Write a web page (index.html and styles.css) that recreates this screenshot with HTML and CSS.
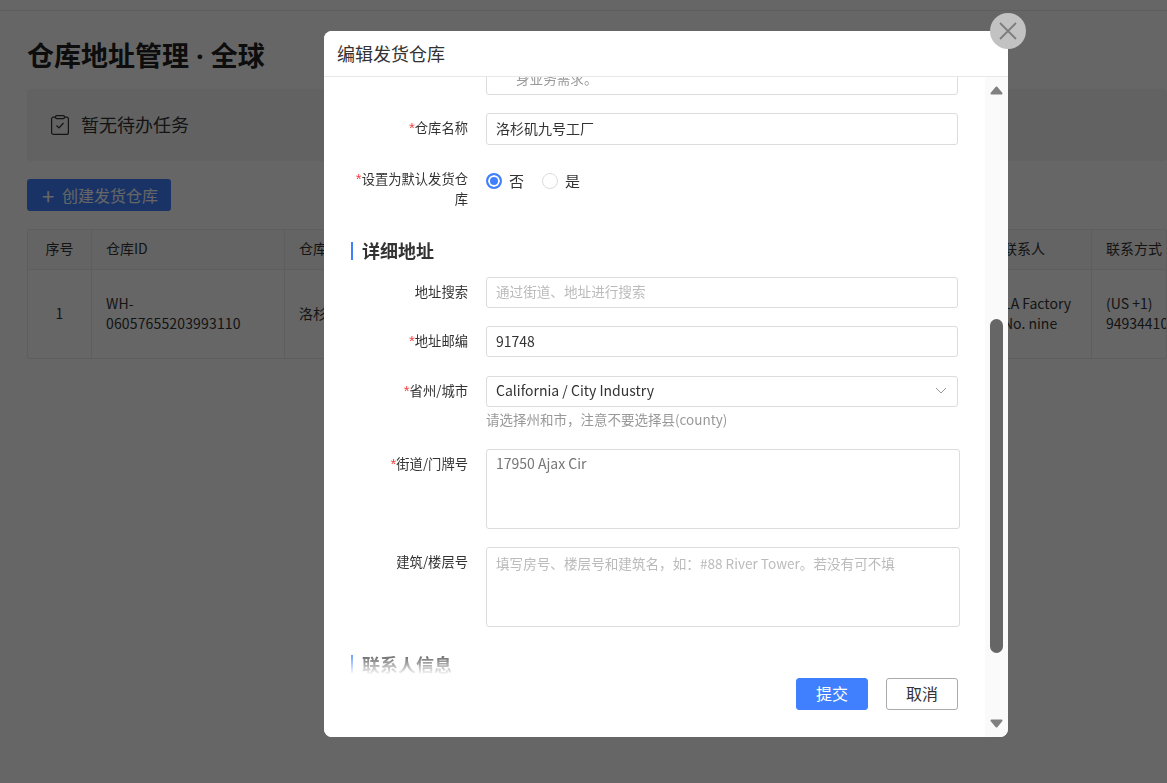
FILE: index.html
```html
<!DOCTYPE html>
<html lang="zh-CN">
<head>
    <meta charset="UTF-8">
    <title>仓库地址管理</title>
    <link rel="stylesheet" href="styles.css">
</head>
<body>
    <div class="topbar">
        <svg class="topbar-art" width="95" height="10" viewBox="0 0 95 10">
            <path d="M18 0 L44 10 L58 10 L32 0 Z" fill="#fff" opacity="0.25"/>
            <path d="M50 0 L76 10 L94 10 L72 0 Z" fill="#fff" opacity="0.3"/>
        </svg>
    </div>

    <div class="page">
        <h1 class="page-title">仓库地址管理<span class="dot"> · </span>全球</h1>

        <div class="todo">
            <svg width="18" height="20" viewBox="0 0 18 20" fill="none" stroke="#333" stroke-width="1.2">
                <rect x="0.6" y="2.1" width="16.8" height="17.3" rx="2"/>
                <rect x="4.6" y="0.6" width="8.8" height="3" rx="1" fill="#f5f5f5"/>
                <path d="M5.5 10.5 L8 13 L12.5 8"/>
            </svg>
            <span class="todo-text">暂无待办任务</span>
        </div>

        <button class="create-btn"><span class="plus">+</span>创建发货仓库</button>

        <div class="table">
            <div class="cell head col-no">序号</div>
            <div class="cell head">仓库ID</div>
            <div class="cell head">仓库名称</div>
            <div class="cell head">联系人</div>
            <div class="cell head">联系方式</div>
            <div class="cell col-no">1</div>
            <div class="cell wide-num">WH-<br>06057655203993110</div>
            <div class="cell">洛杉矶九号工厂</div>
            <div class="cell">LA Factory<br>No. nine</div>
            <div class="cell">(US +1)<br>9493441000</div>
        </div>
    </div>

    <div class="mask"></div>

    <div class="modal">
        <div class="modal-head">编辑发货仓库</div>

        <div class="modal-body">
            <div class="row clipped-row">
                <div class="field-label"></div>
                <div class="box clipped"><span>身业务需求。</span></div>
            </div>

            <div class="row">
                <label class="field-label"><i>*</i>仓库名称</label>
                <div class="box">洛杉矶九号工厂</div>
            </div>

            <div class="row radio-row">
                <label class="field-label"><i>*</i>设置为默认发货仓库</label>
                <div class="radios">
                    <span class="radio on"></span><span class="radio-text">否</span>
                    <span class="radio"></span><span class="radio-text">是</span>
                </div>
            </div>

            <h3 class="section">详细地址</h3>

            <div class="row small first">
                <label class="field-label">地址搜索</label>
                <div class="box hint-text">通过街道、地址进行搜索</div>
            </div>

            <div class="row small">
                <label class="field-label"><i>*</i>地址邮编</label>
                <div class="box">91748</div>
            </div>

            <div class="row small tight">
                <label class="field-label"><i>*</i>省州/城市</label>
                <div class="field-col">
                    <div class="box select">
                        California / City Industry
                        <svg width="12" height="7" viewBox="0 0 12 7" fill="none" stroke="#999" stroke-width="1">
                            <path d="M1 1 L6 6 L11 1"/>
                        </svg>
                    </div>
                    <div class="field-tip">请选择州和市，注意不要选择县(county)</div>
                </div>
            </div>

            <div class="row">
                <label class="field-label"><i>*</i>街道/门牌号</label>
                <div class="box area muted">17950 Ajax Cir</div>
            </div>

            <div class="row">
                <label class="field-label">建筑/楼层号</label>
                <div class="box area hint-text">填写房号、楼层号和建筑名，如：#88 River Tower。若没有可不填</div>
            </div>

            <h3 class="section last">联系人信息</h3>
        </div>

        <div class="modal-fade"></div>
        <div class="modal-foot">
            <button class="btn primary">提交</button>
            <button class="btn">取消</button>
        </div>

        <div class="scrollbar">
            <svg class="arrow up" width="13" height="9" viewBox="0 0 13 9">
                <path d="M6.5 1.5 L11.5 7.5 L1.5 7.5 Z" fill="#808080" stroke="#808080" stroke-width="2" stroke-linejoin="round"/>
            </svg>
            <span class="thumb"></span>
            <svg class="arrow down" width="13" height="9" viewBox="0 0 13 9">
                <path d="M1.5 1.5 L11.5 1.5 L6.5 7.5 Z" fill="#808080" stroke="#808080" stroke-width="2" stroke-linejoin="round"/>
            </svg>
        </div>
    </div>

    <button class="close-btn">
        <svg width="20" height="20" viewBox="0 0 20 20" stroke="#7d7d7d" stroke-width="1.8">
            <path d="M2 2 L18 18 M18 2 L2 18"/>
        </svg>
    </button>
</body>
</html>
```

FILE: styles.css
```css
* {
    margin: 0;
    padding: 0;
    box-sizing: border-box;
}

html, body {
    height: 100%;
    overflow: hidden;
}

body {
    background: #fff;
    color: #333;
    font-family: "Noto Sans CJK SC", "Open Sans", sans-serif;
    font-size: 14px;
}

/* Page under the dialog */
.topbar {
    height: 11px;
    background: #fff;
    border-bottom: 1px solid #eaeaea;
}

.topbar-art {
    display: block;
}

.page {
    padding: 0 0 0 27px;
}

.page-title {
    margin-top: 26px;
    height: 36px;
    font-size: 27px;
    line-height: 36px;
    font-weight: 700;
    color: #222;
}

.dot {
    font-family: "Open Sans", sans-serif;
    white-space: pre;
}

.todo {
    display: flex;
    align-items: center;
    gap: 12px;
    height: 72px;
    margin-top: 16px;
    padding-left: 24px;
    background: #f5f5f5;
    border-radius: 4px;
    font-size: 18px;
    color: #333;
}

.todo-text {
    margin-top: -2px;
}

.create-btn {
    display: flex;
    align-items: center;
    width: 144px;
    height: 32px;
    margin-top: 18px;
    padding-left: 15px;
    background: #4080ff;
    border: none;
    border-radius: 3px;
    color: #fff;
    font-family: inherit;
    font-size: 16px;
}

.plus {
    width: 20px;
    font-size: 22px;
    line-height: 32px;
    text-align: left;
}

.table {
    display: grid;
    grid-template-columns: 64px 193px 704px 103px 1fr;
    grid-template-rows: 40px 88px;
    margin-top: 18px;
    border: 1px solid #eaeaea;
    border-right: none;
    border-radius: 3px;
    line-height: 20px;
}

.cell {
    display: flex;
    flex-direction: column;
    justify-content: center;
    padding-left: 14px;
    padding-bottom: 3px;
    border-right: 1px solid #eaeaea;
    white-space: nowrap;
    overflow: hidden;
    color: #333;
}

.cell.head {
    padding-bottom: 4px;
    background: #fafafa;
    border-bottom: 1px solid #eaeaea;
}

.col-no {
    align-items: center;
    padding-left: 0;
}

.wide-num {
    letter-spacing: 0.15px;
}

.mask {
    position: fixed;
    inset: 0;
    background: rgba(0, 0, 0, 0.6);
}

/* Dialog */
.modal {
    position: fixed;
    left: 324px;
    top: 31px;
    width: 684px;
    height: 706px;
    background: #fff;
    border-radius: 8px;
    overflow: hidden;
}

.modal-head {
    height: 46px;
    padding-left: 13px;
    border-bottom: 1px solid #e8e8e8;
    background: #fff;
    position: relative;
    z-index: 1;
    font-size: 18px;
    line-height: 45px;
    color: #333;
}

.modal-body {
    height: 597px;
    padding-left: 27px;
    overflow: hidden;
}

.row {
    display: flex;
    gap: 18px;
    margin-bottom: 18px;
}

.row.small {
    margin-bottom: 19px;
}

.row.small.first {
    margin-bottom: 18px;
}

.row.small.tight {
    margin-bottom: 20px;
}

.field-label {
    flex: none;
    width: 117px;
    padding-top: 5px;
    font-size: 13.3px;
    line-height: 20px;
    text-align: right;
    color: #333;
}

.field-label i {
    font-family: "Liberation Sans", sans-serif;
    font-size: 15px;
    font-style: normal;
    color: #f53f3f;
}

.box {
    width: 472px;
    height: 32px;
    padding-left: 9px;
    border: 1px solid #dcdcdc;
    border-radius: 3px;
    line-height: 29px;
    color: #333;
    background: #fff;
}

.row.small .box {
    height: 31px;
    line-height: 29px;
}

.clipped-row {
    margin-top: -32px;
}

.clipped {
    height: 50px;
    padding-left: 29px;
    padding-top: 22px;
    color: #999;
    font-size: 13.6px;
    line-height: 20px;
}

.radio-row {
    height: 40px;
    margin-bottom: 0;
    gap: 18px;
}

.radio-row .field-label {
    padding-top: 0;
    margin-top: 6px;
}

.radios {
    display: flex;
    align-items: center;
    height: 16px;
    margin-top: 10px;
    font-size: 15px;
}

.radio {
    width: 16px;
    height: 16px;
    border: 1px solid #dcdcdc;
    border-radius: 50%;
    background: #fff;
}

.radio.on {
    border: 2px solid #4080ff;
    box-shadow: inset 0 0 0 2px #fff;
    background: #4080ff;
}

.radio-text {
    margin-left: 7px;
    margin-right: 18px;
    padding-bottom: 2px;
    color: #333;
}

.section {
    position: relative;
    height: 18px;
    margin-top: 39px;
    margin-bottom: 17px;
    padding-left: 9px;
    border-left: 2px solid #4080ff;
    font-size: 18px;
    line-height: 16px;
    font-weight: 700;
    color: #333;
}

.section.last {
    margin-top: 28px;
    line-height: 18px;
}

.row .hint-text {
    color: #bbb;
    font-size: 13.6px;
}

.row.small .hint-text {
    line-height: 27px;
}

.muted {
    color: #777;
}

.row.small .select {
    display: flex;
    justify-content: space-between;
    align-items: center;
    padding-right: 10px;
    padding-bottom: 3px;
}

.field-tip {
    margin-top: 2px;
    font-size: 13.5px;
    line-height: 20px;
    color: #999;
}

.box.area {
    width: 474px;
    height: 80px;
    padding-top: 1px;
    line-height: 28px;
}

.box.muted {
    line-height: 25px;
}

.modal-fade {
    position: absolute;
    left: 0;
    right: 23px;
    top: 618px;
    height: 26px;
    background: linear-gradient(rgba(255, 255, 255, 0), #fff);
}

.modal-foot {
    position: absolute;
    left: 0;
    right: 23px;
    top: 644px;
    height: 62px;
    display: flex;
    justify-content: flex-end;
    align-items: flex-start;
    gap: 18px;
    padding: 3px 27px 0 0;
    background: #fff;
}

.btn {
    width: 72px;
    height: 32px;
    padding-bottom: 2px;
    background: #fff;
    border: 1px solid #aaa;
    border-radius: 3px;
    font-family: inherit;
    font-size: 16px;
    color: #333;
}

.btn.primary {
    background: #4080ff;
    border-color: #4080ff;
    color: #fff;
}

/* Drawn scrollbar */
.scrollbar {
    position: absolute;
    right: 0;
    top: 46px;
    bottom: 0;
    width: 23px;
    background: #fafafa;
}

.thumb {
    position: absolute;
    left: 5px;
    top: 242px;
    width: 13px;
    height: 334px;
    background: #666;
    border-radius: 7px;
}

.arrow {
    position: absolute;
    left: 5px;
}

.arrow.up {
    top: 9px;
}

.arrow.down {
    bottom: 9px;
}

.close-btn {
    position: fixed;
    left: 990px;
    top: 13px;
    width: 36px;
    height: 36px;
    display: flex;
    align-items: center;
    justify-content: center;
    border: none;
    border-radius: 50%;
    background: #c2c2c2;
}
```
